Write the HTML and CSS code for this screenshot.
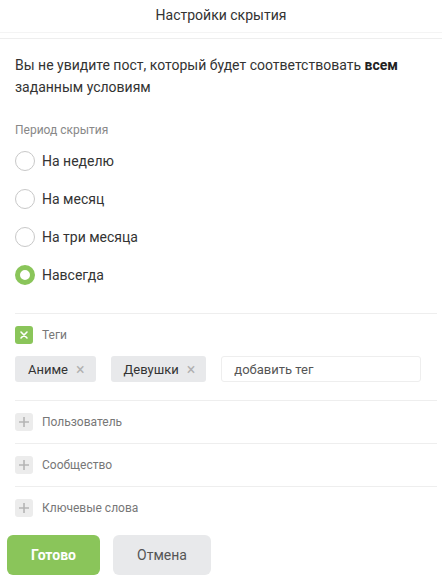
FILE: index.html
```html
<!DOCTYPE html>
<html lang="ru">
<head>
    <meta charset="UTF-8">
    <meta name="viewport" content="width=device-width, initial-scale=1.0">
    <title>Настройки скрытия</title>
    <link rel="stylesheet" href="styles.css">
</head>
<body>
    <div class="modal">
        <div class="modal-header">Настройки скрытия</div>
        <div class="modal-body">
            <p class="desc">Вы не увидите пост, который будет соответствовать <b>всем</b> заданным условиям</p>

            <div class="section-label">Период скрытия</div>
            <div class="radios">
                <label class="radio"><span class="circle"></span>На неделю</label>
                <label class="radio"><span class="circle"></span>На месяц</label>
                <label class="radio"><span class="circle"></span>На три месяца</label>
                <label class="radio checked"><span class="circle"></span>Навсегда</label>
            </div>

            <div class="filter open">
                <div class="filter-head">
                    <span class="box active">
                        <svg width="10" height="10" viewBox="0 0 10 10"><path d="M2 2 L8 8 M8 2 L2 8" stroke="#fff" stroke-width="1.6" stroke-linecap="round"/></svg>
                    </span>
                    Теги
                </div>
                <div class="tags">
                    <span class="tag">Аниме <span class="tag-x">&times;</span></span>
                    <span class="tag">Девушки <span class="tag-x">&times;</span></span>
                    <input class="tag-input" type="text" placeholder="добавить тег">
                </div>
            </div>

            <div class="filter">
                <div class="filter-head">
                    <span class="box">
                        <svg width="12" height="12" viewBox="0 0 12 12"><path d="M6 1 V11 M1 6 H11" stroke="#b5b5b5" stroke-width="1.6"/></svg>
                    </span>
                    Пользователь
                </div>
            </div>
            <div class="filter">
                <div class="filter-head">
                    <span class="box">
                        <svg width="12" height="12" viewBox="0 0 12 12"><path d="M6 1 V11 M1 6 H11" stroke="#b5b5b5" stroke-width="1.6"/></svg>
                    </span>
                    Сообщество
                </div>
            </div>
            <div class="filter">
                <div class="filter-head">
                    <span class="box">
                        <svg width="12" height="12" viewBox="0 0 12 12"><path d="M6 1 V11 M1 6 H11" stroke="#b5b5b5" stroke-width="1.6"/></svg>
                    </span>
                    Ключевые слова
                </div>
            </div>
        </div>
        <div class="modal-footer">
            <button class="btn btn-primary">Готово</button>
            <button class="btn btn-secondary">Отмена</button>
        </div>
    </div>
</body>
</html>
```

FILE: styles.css
```css
body {
    margin: 0;
    font-family: Roboto, "Noto Sans", sans-serif;
    background: #fff;
    color: #333;
}
.modal {
    width: 442px;
}
.modal-header {
    height: 32px;
    line-height: 30px;
    text-align: center;
    font-size: 14px;
    color: #333;
    border-bottom: 1px solid #f4f4f4;
}
.modal-body {
    margin-top: 5px;
    border-top: 1px solid #eee;
    padding: 15px 5px 0 15px;
}
.desc {
    margin: 0;
    font-size: 14px;
    line-height: 22px;
    color: #333;
}
.desc b {
    color: #222;
}
.section-label {
    margin-top: 24px;
    font-size: 12px;
    line-height: 16px;
    color: #888;
}
.radios {
    margin-top: 4px;
    margin-bottom: 19px;
}
.radio {
    display: flex;
    align-items: center;
    height: 38px;
    font-size: 14px;
    color: #333;
}
.circle {
    box-sizing: border-box;
    width: 20px;
    height: 20px;
    border: 1px solid #c8c8c8;
    border-radius: 50%;
    margin-right: 7px;
    background: #fff;
}
.radio.checked .circle {
    border: 5px solid #8ac55a;
}
.filter {
    border-top: 1px solid #eee;
    padding: 12px 0;
}
.filter.open {
    padding-bottom: 18px;
}
.filter-head {
    display: flex;
    align-items: center;
    height: 18px;
    font-size: 12px;
    color: #777;
}
.box {
    display: flex;
    align-items: center;
    justify-content: center;
    width: 18px;
    height: 18px;
    border-radius: 3px;
    background: #ececec;
    margin-right: 9px;
}
.box.active {
    background: #8ac55a;
}
.tags {
    display: flex;
    gap: 15px;
    margin-top: 12px;
}
.tag {
    display: flex;
    align-items: center;
    height: 26px;
    padding: 0 11px 0 13px;
    border-radius: 3px;
    background: #e8e9eb;
    font-size: 13px;
    color: #333;
}
.tag-x {
    margin-left: 8px;
    font-size: 16px;
    color: #b0b0b0;
}
.tag-input {
    box-sizing: border-box;
    width: 200px;
    height: 26px;
    border: 1px solid #eee;
    border-radius: 3px;
    padding: 0 12px;
    font-family: Roboto, sans-serif;
    font-size: 13px;
    outline: none;
}
.tag-input::placeholder {
    color: #555;
}
.modal-footer {
    display: flex;
    gap: 13px;
    padding: 6px 0 0 7px;
}
.btn {
    height: 40px;
    border: none;
    border-radius: 6px;
    font-family: Roboto, sans-serif;
    font-size: 14px;
    cursor: pointer;
}
.btn-primary {
    width: 93px;
    background: #8ac55a;
    color: #fff;
    font-weight: bold;
}
.btn-secondary {
    width: 98px;
    background: #e8e9eb;
    color: #555;
}
```
